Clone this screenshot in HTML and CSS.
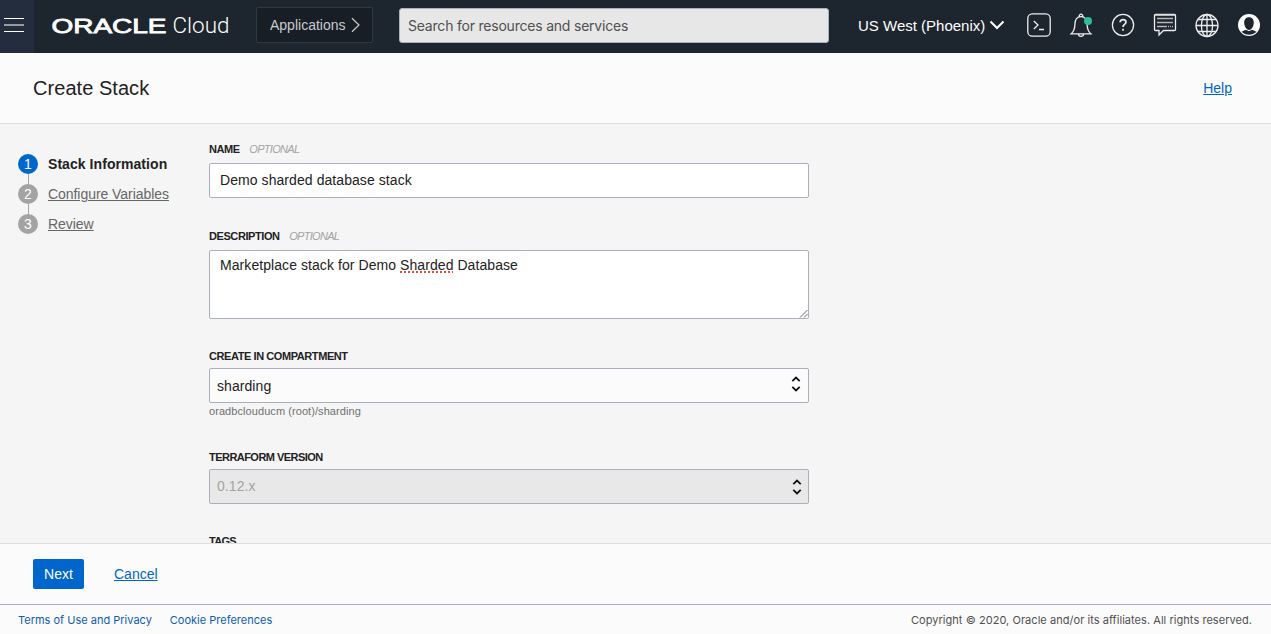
FILE: index.html
```html
<!DOCTYPE html>
<html lang="en">
<head>
<meta charset="utf-8">
<title>Create Stack</title>
<link rel="stylesheet" href="styles.css">
</head>
<body>
<div class="page">
  <header class="topbar">
    <button class="menu" aria-label="Menu"><span></span><span class="dim"></span><span></span></button>
    <svg class="logo" width="178" height="28" viewBox="0 0 178 28">
      <text class="logo-oracle" x="-.5" y="21.500" textLength="115" lengthAdjust="spacingAndGlyphs">ORACLE</text>
      <text class="logo-cloud" x="120.500" y="22" textLength="57" lengthAdjust="spacingAndGlyphs">Cloud</text>
    </svg>
    <button class="apps"><span>Applications</span>
      <svg width="9" height="16" viewBox="0 0 9 16"><path d="M1 1.2 8 8 1 14.8"/></svg>
    </button>
    <div class="search">Search for resources and services</div>
    <div class="region"><span>US West (Phoenix)</span>
      <svg width="16" height="10" viewBox="0 0 16 10"><path d="M1.5 1.5 8 8 14.5 1.5"/></svg>
    </div>
    <nav class="tools">
      <svg viewBox="0 0 24 24"><rect x=".8" y=".8" width="22.4" height="22.4" rx="4.5"/><path d="M6.8 8 11 12l-4.200 4M12 16.500h5"/></svg>
      <svg viewBox="0 0 24 24"><path d="M2.200 20.800C4.800 18.500 5.800 16 5.900 11.500 6 6.500 7.800 3.600 12 3.600s6 2.900 6.100 7.900c.1 4.500 1.100 7 3.700 9.300ZM10.300 3.600c-.6-3.200 4-3.200 3.400 0M9.300 21c.3 3.200 5.100 3.200 5.400 0"/><circle class="dot" cx="19" cy="8" r="4"/></svg>
      <svg viewBox="0 0 24 24"><circle cx="12" cy="12" r="10.600"/><path class="bold" d="M9.100 9.300c.2-3.600 6-3.500 5.900-.2 0 2.400-3 2.300-3 4.900M12 15.800v2"/></svg>
      <svg viewBox="0 0 24 24"><path d="M2.500 1.500h19a1 1 0 0 1 1 1V16.500a1 1 0 0 1-1 1H10.500L6 22V17.500H2.500a1 1 0 0 1-1-1V2.500a1 1 0 0 1 1-1Z"/><path class="soft" d="M2 2.300h20M4 5.500h16M4 9.500h16M4 13.500h10M15 13.500h1M17 13.500h1M19 13.500h1"/></svg>
      <svg viewBox="0 0 24 24"><circle cx="12" cy="12.500" r="11"/><ellipse cx="12" cy="12.500" rx="5.600" ry="11"/><path d="M12 1.500v22M1 12.500h22M3.200 6.500h17.600M3.200 18.500h17.600"/></svg>
      <svg viewBox="0 0 24 24"><circle class="white" cx="12" cy="12" r="11"/><path class="dark" d="M12 4.300c3.400 0 5 2.500 4.800 5.700-.2 2.400-1 4.200-2.200 5.400v1.200l4.900 2.200c-4 4-11 4-15 0l4.900-2.200v-1.200C8.200 14.200 7.400 12.400 7.200 10 7 6.800 8.600 4.300 12 4.300Z"/><path class="collar" d="M8.800 16.300 12 17.600l3.200-1.300"/></svg>
    </nav>
  </header>

  <section class="titlebar">
    <h1>Create Stack</h1>
    <a class="link" href="#">Help</a>
  </section>

  <main class="content">
    <ol class="steps">
      <li class="step active"><span class="num">1</span><b>Stack Information</b></li>
      <li class="step"><span class="num">2</span><a href="#">Configure Variables</a></li>
      <li class="step"><span class="num">3</span><a href="#">Review</a></li>
    </ol>
    <form class="form">
      <div class="field name">
        <div class="label">NAME <i>OPTIONAL</i></div>
        <div class="input">Demo sharded database stack</div>
      </div>
      <div class="field description">
        <div class="label">DESCRIPTION <i>OPTIONAL</i></div>
        <div class="input area"><p>Marketplace stack for Demo <span class="typo">Sharded</span> Database</p>
          <svg class="grip" width="9" height="9" viewBox="0 0 9 9"><path d="M1 8.500 8.500 1M5 8.500 8.500 5"/></svg>
        </div>
      </div>
      <div class="field compartment">
        <div class="label">CREATE IN COMPARTMENT</div>
        <div class="input select"><span>sharding</span>
          <svg width="10" height="16" viewBox="0 0 10 16"><path d="M1.300 5.200 5 1.600l3.700 3.600M1.300 10.800 5 14.400l3.700-3.600"/></svg>
        </div>
        <div class="hint">oradbclouducm (root)/sharding</div>
      </div>
      <div class="field terraform">
        <div class="label">TERRAFORM VERSION</div>
        <div class="input select disabled"><span>0.12.x</span>
          <svg width="10" height="16" viewBox="0 0 10 16"><path d="M1.300 5.200 5 1.600l3.700 3.600M1.300 10.800 5 14.400l3.700-3.600"/></svg>
        </div>
      </div>
      <div class="field tags"><div class="label">TAGS</div></div>
    </form>
  </main>

  <div class="actions">
    <button class="next">Next</button>
    <a class="link" href="#">Cancel</a>
  </div>

  <footer class="footer">
    <a class="terms" href="#">Terms of Use and Privacy</a>
    <a class="cookies" href="#">Cookie Preferences</a>
    <span class="copyright">Copyright © 2020, Oracle and/or its affiliates. All rights reserved.</span>
  </footer>
</div>
</body>
</html>
```
FILE: styles.css
```css
* { box-sizing: border-box; }
body {
  margin: 0;
  font-family: "Liberation Sans", Arial, sans-serif;
  font-size: 14px;
  color: #222;
  background: #fbfbfb;
}
button { font: inherit; margin: 0; padding: 0; }
.page { display: flex; flex-direction: column; height: 634px; overflow: hidden; }

.topbar { display: flex; align-items: center; flex: none; height: 53px; background: #1d252e; padding-bottom: 3px; }
.menu {
  display: flex; flex-direction: column; align-items: flex-start; gap: 5px;
  width: 34px; height: 53px; margin-bottom: -3px; padding: 18px 0 0 4px;
  border: 0; background: #232d3d;
}
.menu span { flex: none; width: 20px; height: 1px; background: #fff; }
.menu .dim { height: 2px; background: #9a9ca2; }
.logo { flex: none; margin-left: 18px; overflow: visible; }
.logo-oracle { font: 400 20px "Liberation Sans", Arial, sans-serif; fill: #fff; stroke: #fff; stroke-width: .8; }
.logo-cloud { font: 300 22.5px Roboto, sans-serif; fill: #fff; }
.apps {
  display: flex; align-items: center; gap: 5px; flex: none;
  width: 117px; height: 36px; margin-left: 26px; padding-left: 13px;
  border: 1px solid #303841; border-radius: 2px; background: #171e26; color: #c9cbcd;
}
.apps svg { fill: none; stroke: #c9cbcd; stroke-width: 1.2; }
.search {
  flex: none; width: 430px; height: 35px; margin: 1px 0 0 26px; padding-left: 8px; line-height: 33px;
  border: 1px solid #a9b2bf; border-radius: 3px; background: #e7e7e7; color: #505050;
  font-family: Inter, sans-serif; letter-spacing: -.21px;
}
.region { display: flex; align-items: center; gap: 4px; flex: none; width: 169px; margin-left: 29px; color: #fff; font-size: 15px; white-space: nowrap; }
.region svg { fill: none; stroke: #fff; stroke-width: 2; }
.tools { display: flex; gap: 18px; }
.tools svg { width: 24px; height: 24px; fill: none; stroke: #eee; stroke-width: 1.3; overflow: visible; }
.tools .dot { fill: #2ebd9b; stroke: none; }
.tools .bold { stroke-width: 1.7; }
.tools .soft { stroke: #b4b8bc; }
.tools .white { fill: #fff; stroke: none; }
.tools .dark { fill: #1d252e; stroke: none; }
.tools .collar { stroke: #fff; stroke-width: 1; }

.titlebar {
  display: flex; align-items: center; justify-content: space-between; flex: none;
  height: 71px; padding: 0 39px 0 33px; border-bottom: 1px solid #dedede; background: #fbfbfb;
}
h1 { margin: 0; font-size: 20px; font-weight: 400; letter-spacing: .05px; }
.link { color: #0066cc; text-underline-offset: 1px; }

.content { display: flex; height: 419px; flex: none; overflow: hidden; background: #f5f5f5; }
.steps { list-style: none; width: 209px; margin: 0; padding: 30px 0 0 18px; }
.step { display: flex; gap: 10px; height: 30px; line-height: 20px; white-space: nowrap; color: #222; }
.step b { letter-spacing: .06px; }
.step a { color: #666; letter-spacing: -.05px; }
.num { position: relative; width: 20px; height: 20px; border-radius: 50%; background: #a3a3a3; color: #fff; text-align: center; }
.step.active .num { background: #0066cc; }
.step:not(:last-child) .num::after { content: ""; position: absolute; left: 10px; top: 20px; width: 1px; height: 10px; background: #a3a3a3; }

.form { width: 600px; padding-top: 17px; }
.label { height: 22px; line-height: 16px; font-size: 11px; font-weight: 600; letter-spacing: -.42px; color: #222; }
.label i { margin-left: 7px; font-weight: 400; color: #a3a3a3; letter-spacing: -.7px; }
.input { position: relative; height: 35px; padding: 0 10px; line-height: 33px; letter-spacing: .07px; border: 1px solid #a9b0bb; border-radius: 2px; background: #fff; }
.area { height: 69px; }
.area p { margin: 0; padding-top: 5px; line-height: 18px; }
.typo { text-decoration: underline dotted #f0473e 2px; text-underline-offset: 1px; text-decoration-skip-ink: none; }
.grip { position: absolute; right: 0; bottom: 0; fill: none; stroke: #555; stroke-width: .9; }
.select { display: flex; align-items: center; justify-content: space-between; padding: 0 7px; background: #fbfbfb; }
.select svg { margin-top: -3px; fill: none; stroke: #111; stroke-width: 1.8; }
.compartment .select span { padding-top: 1px; }
.disabled { padding-right: 6px; background: #e8e8e8; color: #a3a3a3; }
.disabled svg { margin-top: 1px; }
.name { height: 87px; }
.description { height: 119px; }
.compartment { height: 101px; padding-top: 1px; }
.terraform { height: 84px; padding-top: 1px; }
.compartment .label, .terraform .label { height: 20px; }
.terraform .label { letter-spacing: -.54px; }
.tags { padding-top: 1px; }
.tags .label { letter-spacing: -.7px; }
.hint { line-height: 16px; font-size: 11px; letter-spacing: .07px; color: #707070; }

.actions { display: flex; align-items: center; gap: 30px; flex: none; height: 61px; padding-left: 33px; border-top: 1px solid #dedede; }
.next { width: 51px; height: 30px; border: 0; border-radius: 2px; background: #0066cc; color: #fff; }
.footer {
  display: flex; align-items: center; flex: none; height: 30px; padding: 1px 19px 0 18px;
  border-top: 1px solid #a9b0bb; font-family: Inter, sans-serif; font-size: 11px; color: #505050;
}
.footer a { color: #0f5cb8; text-decoration: none; }
.cookies { margin-left: 18px; }
.copyright { margin-left: auto; letter-spacing: .045px; }
```
